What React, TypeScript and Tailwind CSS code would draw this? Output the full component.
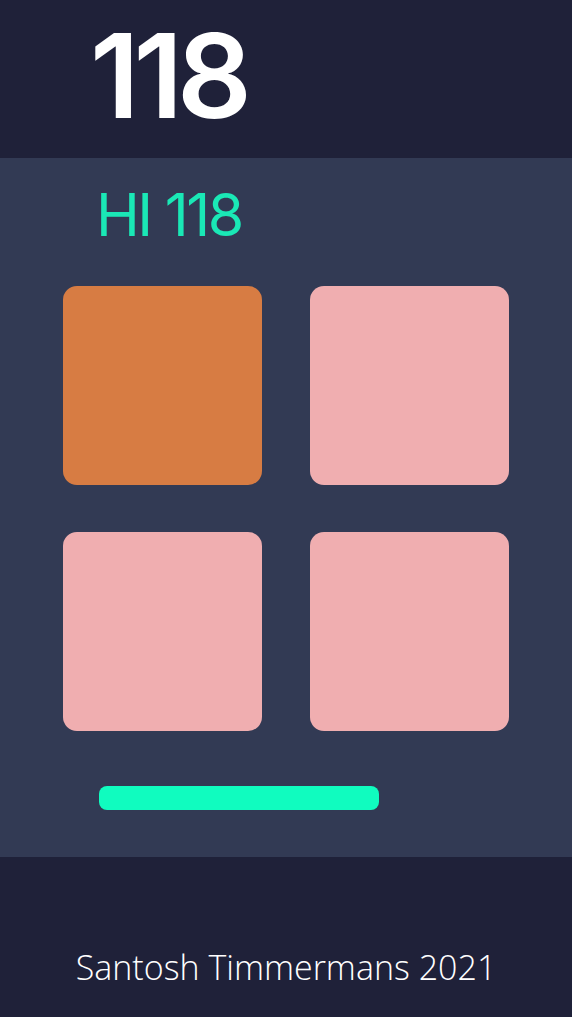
export default function App() {
  const tiles = ['bg-[#d77c43]', 'bg-[#f0aeb0]', 'bg-[#f0aeb0]', 'bg-[#f0aeb0]'];

  return (
    <div className="w-[572px] h-[1017px] flex flex-col bg-[#1f2139] font-['Open_Sans',sans-serif]">
      {/* score */}
      <header className="h-[158px] shrink-0 pl-[90px] pt-[17px]">
        <div className="font-['Inter',sans-serif] text-[117px] leading-none font-semibold text-white tracking-[-6px]">118</div>
      </header>

      {/* board */}
      <main className="h-[699px] shrink-0 bg-[#323a54] flex flex-col pt-[27px]">
        <div className="font-['Inter',sans-serif] pl-[96px] text-[59px] leading-none text-[#1ae8b6] tracking-[-2.5px]">HI 118</div>
        <div className="mt-[42px] mx-auto grid grid-cols-2 gap-x-[48px] gap-y-[47px]">
          {tiles.map((c, i) => (
            <div key={i} className={`w-[199px] h-[199px] rounded-[14px] ${c}`} />
          ))}
        </div>
        <div className="mt-[55px] ml-[99px] w-[280px] h-[24px] rounded-[8px] bg-[#10fcbf]" />
      </main>

      {/* footer */}
      <footer className="flex-1 flex justify-center pt-[93px]">
        <span className="text-[34px] leading-none font-light text-white">Santosh Timmermans 2021</span>
      </footer>
    </div>
  );
}
